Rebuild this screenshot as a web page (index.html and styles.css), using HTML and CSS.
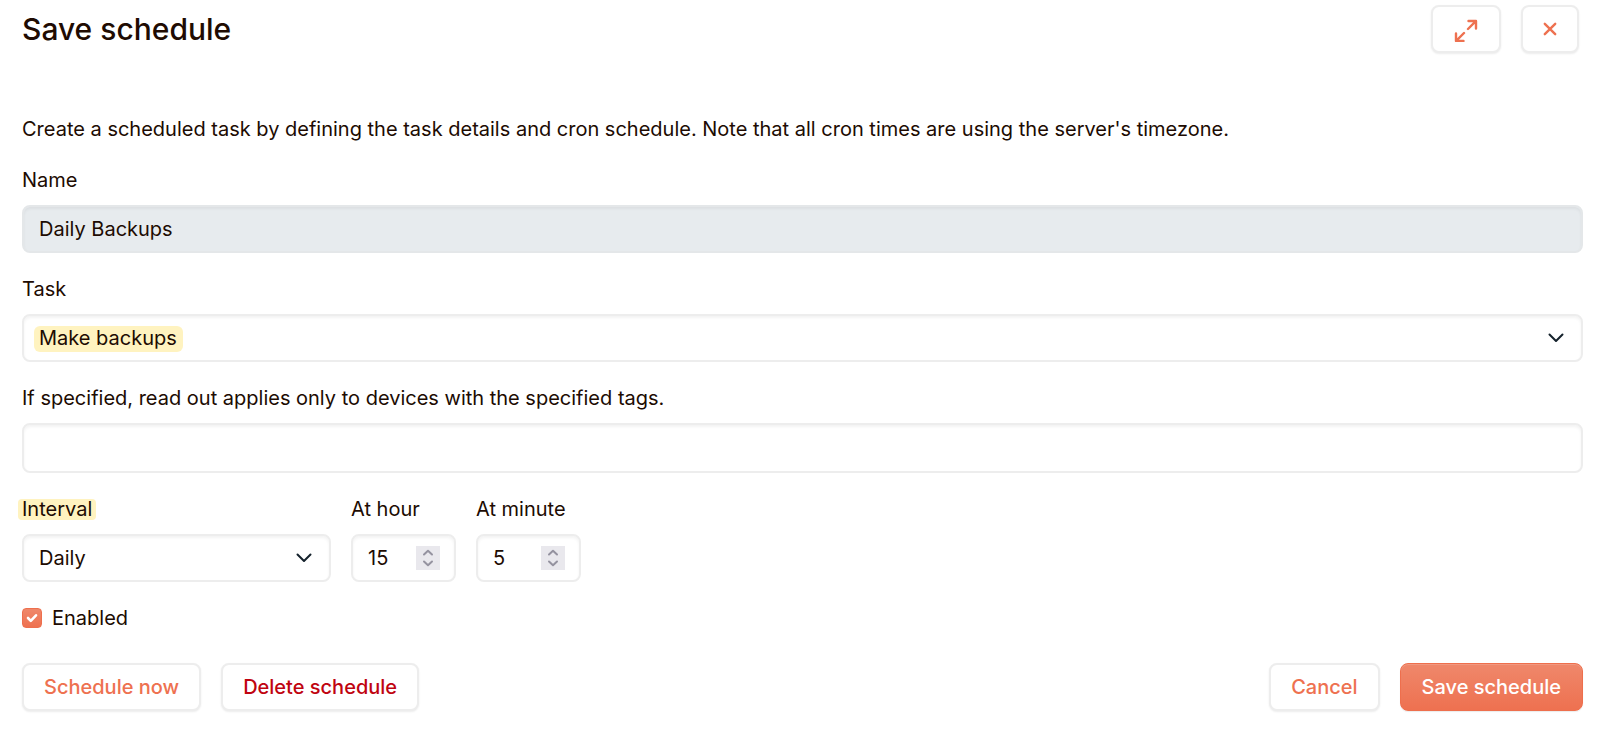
FILE: index.html
```html
<!DOCTYPE html>
<html lang="en">
<head>
  <meta charset="UTF-8">
  <meta name="viewport" content="width=device-width, initial-scale=1">
  <title>Save schedule</title>
  <link rel="stylesheet" href="styles.css">
</head>
<body>
  <header class="modal-header">
    <h1>Save schedule</h1>
    <div class="header-buttons">
      <button type="button" class="btn btn-icon" id="expand" aria-label="Expand">
        <svg width="26" height="26" viewBox="0 0 26 26">
          <path d="M15 13 L22.8 5.2 M15.5 5 H23 V12.5 M11 17 L3.2 24.8 M3 17.5 V25 H10.5"/>
        </svg>
      </button>
      <button type="button" class="btn btn-icon" id="close" aria-label="Close">
        <svg width="14" height="14" viewBox="0 0 14 14">
          <path d="M1.8 1.8 L12.2 12.2 M12.2 1.8 L1.8 12.2"/>
        </svg>
      </button>
    </div>
  </header>

  <form id="scheduleForm">
    <p class="intro">Create a scheduled task by defining the task details and cron schedule. Note that all cron times are using the server's timezone.</p>

    <div class="field">
      <label for="name">Name</label>
      <input type="text" class="control" id="name" value="Daily Backups" readonly>
    </div>

    <div class="field">
      <label for="task">Task</label>
      <div class="select-wrap highlighted">
        <select class="control" id="task">
          <option>Make backups</option>
        </select>
      </div>
    </div>

    <div class="field">
      <label for="tags">If specified, read out applies only to devices with the specified tags.</label>
      <input type="text" class="control control-tags" id="tags">
    </div>

    <div class="interval-row">
      <div class="field field-interval">
        <label for="interval"><mark>Interval</mark></label>
        <select class="control" id="interval">
          <option>Daily</option>
        </select>
      </div>
      <div class="field field-number">
        <label for="hour">At hour</label>
        <input type="number" class="control" id="hour" min="0" max="23" value="15">
      </div>
      <div class="field field-number">
        <label for="minute">At minute</label>
        <input type="number" class="control" id="minute" min="0" max="59" value="5">
      </div>
    </div>

    <div class="check">
      <input type="checkbox" id="enabled" checked>
      <label for="enabled">Enabled</label>
    </div>

    <footer class="actions">
      <button type="button" class="btn">Schedule now</button>
      <button type="button" class="btn btn-danger">Delete schedule</button>
      <button type="button" class="btn btn-cancel">Cancel</button>
      <button type="submit" class="btn btn-primary">Save schedule</button>
    </footer>
  </form>
</body>
</html>
```
FILE: styles.css
```css
* {
  box-sizing: border-box;
}
body {
  margin: 0;
  padding: 5px 17px 32px 22px;
  background: #fff;
  color: #200b02;
  font-family: Inter, "Liberation Sans", sans-serif;
  font-size: 20px;
  line-height: 30px;
}
h1 {
  margin: 0;
  font-size: 30px;
  font-weight: 500;
  line-height: 48px;
}
.modal-header {
  display: flex;
  justify-content: space-between;
  align-items: center;
  padding-right: 4px;
  margin-bottom: 61px;
}
.header-buttons {
  display: flex;
  gap: 20px;
}
.intro {
  margin: 0 0 21px;
}
.field {
  margin-bottom: 21px;
}
.field label {
  display: block;
  margin-bottom: 10px;
}
mark {
  margin: 0 -4px;
  padding: 0 4px;
  border-radius: 4px;
  background: #fff3c0;
  color: inherit;
  display: inline-block;
  line-height: 21px;
}

/* inputs */
.control {
  display: block;
  width: 100%;
  height: 48px;
  margin: 0;
  padding: 0 15px;
  border: 2px solid #ededed;
  border-radius: 8px;
  background-color: #fff;
  box-shadow: inset 0 2px 3px rgba(0, 0, 0, 0.05);
  color: inherit;
  font: inherit;
}
.control[readonly] {
  border-color: #e4e7e9;
  background-color: #e7ebee;
}
.control-tags {
  height: 50px;
}
select.control {
  appearance: none;
  padding-right: 48px;
  background-image: url("data:image/svg+xml,%3Csvg xmlns='http://www.w3.org/2000/svg' width='16' height='10' fill='none' stroke='%2315222c' stroke-width='2' stroke-linecap='round' stroke-linejoin='round'%3E%3Cpath d='M1.5 1.5 8 8 14.5 1.5'/%3E%3C/svg%3E");
  background-repeat: no-repeat;
  background-position: right 17px center;
}
.select-wrap {
  position: relative;
}
.highlighted select {
  background-color: transparent;
}
.highlighted::before {
  content: "";
  position: absolute;
  z-index: -1;
  top: 12px;
  left: 12px;
  width: 149px;
  height: 26px;
  border-radius: 6px;
  background: #fff3c0;
}
.interval-row {
  display: flex;
  gap: 20px;
}
.field-interval {
  width: 309px;
}
.field-number {
  width: 105px;
}
input[type="number"] {
  padding-right: 14px;
}
input[type="number"]::-webkit-inner-spin-button {
  appearance: none;
  width: 24px;
  height: 24px;
  opacity: 1;
  background: #e9e8ed url("data:image/svg+xml,%3Csvg xmlns='http://www.w3.org/2000/svg' width='24' height='24' fill='none' stroke='%239593a0' stroke-width='2' stroke-linecap='round' stroke-linejoin='round'%3E%3Cpath d='M8 8.5 12 4.8 16 8.5M8 15.5 12 19.2 16 15.5'/%3E%3C/svg%3E");
}

/* checkbox */
.check {
  display: flex;
  align-items: center;
  gap: 10px;
  margin-bottom: 30px;
}
.check input {
  appearance: none;
  width: 20px;
  height: 20px;
  margin: 0;
  border: 1px solid #ee6f4d;
  border-radius: 4px;
  background: url("data:image/svg+xml,%3Csvg xmlns='http://www.w3.org/2000/svg' width='12' height='10' fill='none' stroke='white' stroke-width='2.6' stroke-linecap='round' stroke-linejoin='round'%3E%3Cpath d='M2 5 4.8 7.8 10 2.3'/%3E%3C/svg%3E") center no-repeat, linear-gradient(#ef886b, #ee7150);
}

/* buttons */
.btn {
  height: 48px;
  padding: 0 20px;
  border: 2px solid #ededed;
  border-radius: 8px;
  background: #fff;
  box-shadow: 0 1px 2px rgba(0, 0, 0, 0.08);
  color: #ee7150;
  font: inherit;
  font-weight: 500;
  cursor: pointer;
}
.btn-icon {
  display: flex;
  align-items: center;
}
.btn-icon svg {
  fill: none;
  stroke: currentColor;
  stroke-width: 2.4;
  stroke-linecap: round;
  stroke-linejoin: round;
}
.btn-danger {
  color: #c00410;
}
.btn-primary {
  padding: 0 21px;
  border: 1px solid #ee6f4d;
  background: linear-gradient(#ef886b, #ee7150);
  box-shadow: inset 0 1px 0 rgba(255, 255, 255, 0.15), 0 1px 1px rgba(0, 0, 0, 0.08);
  color: #fff;
}
.actions {
  display: flex;
  gap: 20px;
}
.btn-cancel {
  margin-left: auto;
}
```
